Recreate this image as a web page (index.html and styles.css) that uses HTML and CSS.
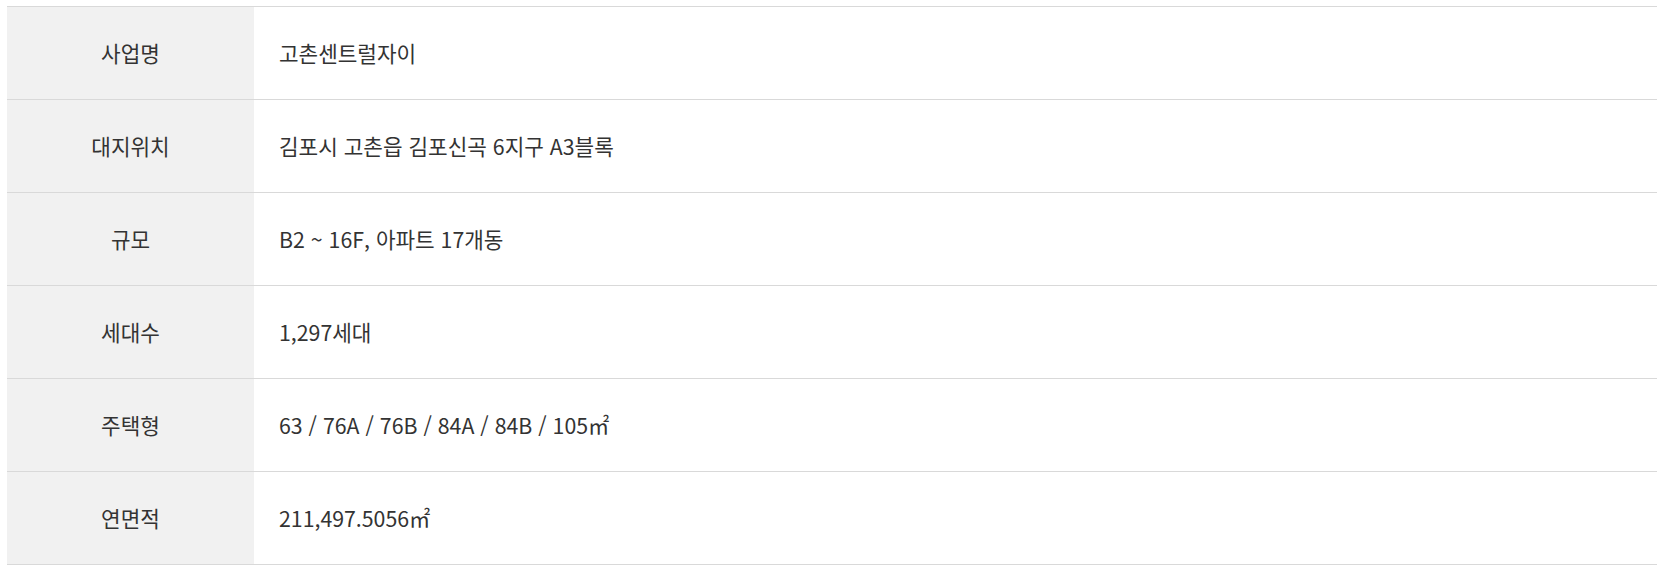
FILE: index.html
```html
<!DOCTYPE html>
<html lang="ko">
<head>
<meta charset="utf-8">
<link rel="stylesheet" href="styles.css">
</head>
<body>
<table class="info">
  <tbody>
    <tr><th>사업명</th><td>고촌센트럴자이</td></tr>
    <tr><th>대지위치</th><td>김포시 고촌읍 김포신곡 6지구 A3블록</td></tr>
    <tr><th>규모</th><td>B2 ~ 16F, 아파트 17개동</td></tr>
    <tr><th>세대수</th><td>1,297세대</td></tr>
    <tr><th>주택형</th><td>63 / 76A / 76B / 84A / 84B / 105㎡</td></tr>
    <tr><th>연면적</th><td>211,497.5056㎡</td></tr>
  </tbody>
</table>
</body>
</html>
```
FILE: styles.css
```css
html, body {
  margin: 0;
  padding: 0;
  background: #fff;
}
body {
  padding: 6px 0 0 7px;
  font-family: "Noto Sans CJK KR", "Noto Sans", sans-serif;
  color: #333;
}
.info {
  width: 1650px;
  border-collapse: collapse;
  border-top: 1px solid #d9d9d9;
}
.info tr {
  border-bottom: 1px solid #d9d9d9;
}
.info th,
.info td {
  height: 92px;
  padding: 0;
  font-weight: 400;
  font-size: 21.3px;
  vertical-align: middle;
  line-height: 1;
}
.info th {
  width: 247px;
  background: #f1f1f1;
  text-align: center;
}
.info td {
  padding-left: 25px;
  text-align: left;
}
```
